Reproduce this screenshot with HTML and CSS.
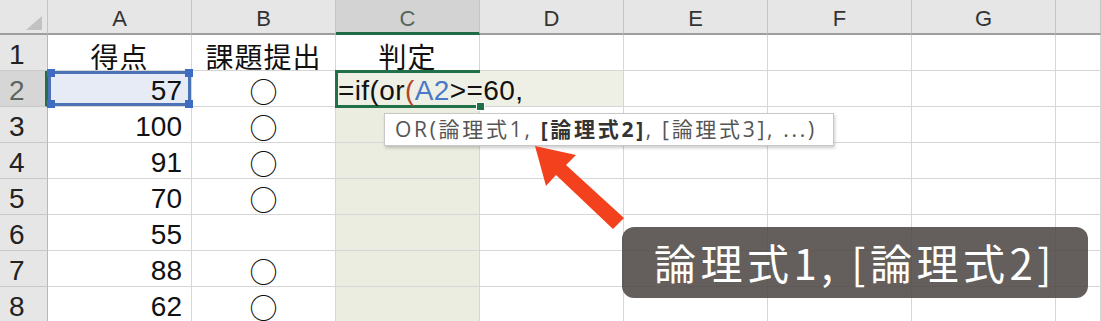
FILE: index.html
```html
<!DOCTYPE html>
<html lang="ja">
<head>
  <meta charset="UTF-8">
  <title>判定</title>
  <link rel="stylesheet" href="styles.css">
</head>
<body>
  <div class="sheet">
    <!-- header row -->
    <div class="corner"><span class="corner-mark"></span></div>
    <div class="colhead">A</div>
    <div class="colhead">B</div>
    <div class="colhead active">C</div>
    <div class="colhead">D</div>
    <div class="colhead">E</div>
    <div class="colhead">F</div>
    <div class="colhead">G</div>
    <div class="colhead"></div>

    <!-- row 1 -->
    <div class="rowhead">1</div>
    <div class="cell title">得点</div>
    <div class="cell title">課題提出</div>
    <div class="cell title">判定</div>
    <div class="cell"></div>
    <div class="cell"></div>
    <div class="cell"></div>
    <div class="cell"></div>
    <div class="cell"></div>

    <!-- row 2 -->
    <div class="rowhead active">2</div>
    <div class="cell num ref">57
      <span class="handle tl"></span><span class="handle tr"></span>
      <span class="handle bl"></span><span class="handle br"></span>
    </div>
    <div class="cell center"><span class="mark">○</span></div>
    <div class="cell edit">=if(or<span class="paren">(</span><span class="refname">A2</span>&gt;=60,<span class="fill-handle"></span></div>
    <div class="cell spill"></div>
    <div class="cell"></div>
    <div class="cell"></div>
    <div class="cell"></div>
    <div class="cell"></div>

    <!-- row 3 -->
    <div class="rowhead">3</div>
    <div class="cell num">100</div>
    <div class="cell center"><span class="mark">○</span></div>
    <div class="cell tint"></div>
    <div class="cell"></div>
    <div class="cell"></div>
    <div class="cell"></div>
    <div class="cell"></div>
    <div class="cell"></div>

    <!-- row 4 -->
    <div class="rowhead">4</div>
    <div class="cell num">91</div>
    <div class="cell center"><span class="mark">○</span></div>
    <div class="cell tint"></div>
    <div class="cell"></div>
    <div class="cell"></div>
    <div class="cell"></div>
    <div class="cell"></div>
    <div class="cell"></div>

    <!-- row 5 -->
    <div class="rowhead">5</div>
    <div class="cell num">70</div>
    <div class="cell center"><span class="mark">○</span></div>
    <div class="cell tint"></div>
    <div class="cell"></div>
    <div class="cell"></div>
    <div class="cell"></div>
    <div class="cell"></div>
    <div class="cell"></div>

    <!-- row 6 -->
    <div class="rowhead">6</div>
    <div class="cell num">55</div>
    <div class="cell center"></div>
    <div class="cell tint"></div>
    <div class="cell"></div>
    <div class="cell"></div>
    <div class="cell"></div>
    <div class="cell"></div>
    <div class="cell"></div>

    <!-- row 7 -->
    <div class="rowhead">7</div>
    <div class="cell num">88</div>
    <div class="cell center"><span class="mark">○</span></div>
    <div class="cell tint"></div>
    <div class="cell"></div>
    <div class="cell"></div>
    <div class="cell"></div>
    <div class="cell"></div>
    <div class="cell"></div>

    <!-- row 8 -->
    <div class="rowhead">8</div>
    <div class="cell num">62</div>
    <div class="cell center"><span class="mark">○</span></div>
    <div class="cell tint"></div>
    <div class="cell"></div>
    <div class="cell"></div>
    <div class="cell"></div>
    <div class="cell"></div>
    <div class="cell"></div>
  </div>

  <!-- function hint -->
  <div class="tooltip">OR(論理式1, <b>[論理式2]</b>, [論理式3], ...)</div>

  <svg class="arrow" width="1101" height="321" viewBox="0 0 1101 321">
    <polygon points="535,146 576,155 566,165 624,218 613,229 556,175 546,186" fill="#f4411d"/>
  </svg>

  <div class="caption">論理式1, [論理式2]</div>
</body>
</html>
```

FILE: styles.css
```css
* {
  margin: 0;
  padding: 0;
  box-sizing: border-box;
}

body {
  width: 1101px;
  height: 321px;
  overflow: hidden;
  background: #fff;
  position: relative;
  font-family: 'Liberation Sans', 'Noto Sans CJK JP', sans-serif;
  color: #111;
}

.sheet {
  display: grid;
  grid-template-columns: 48px repeat(7, 144px) 1fr;
  grid-template-rows: 35px repeat(8, 36px);
}

/* headers */
.corner {
  background: #e6e6e6;
  border-right: 1px solid #c4c4c4;
  border-bottom: 2px solid #9e9e9e;
  position: relative;
}

.corner-mark {
  position: absolute;
  right: 5px;
  bottom: 3px;
  width: 0;
  height: 0;
  border-left: 16px solid transparent;
  border-bottom: 14px solid #c2c2c2;
}

.colhead {
  background: #e6e6e6;
  border-right: 1px solid #c4c4c4;
  border-bottom: 2px solid #9e9e9e;
  font-size: 22px;
  line-height: 33px;
  padding-top: 2px;
  text-align: center;
  color: #333;
  overflow: hidden;
}

.colhead.active {
  background: #d3d3d3;
  border-bottom: 3px solid #1f6b45;
  color: #55655a;
}

.rowhead {
  background: #e6e6e6;
  border-right: 1px solid #b8b8b8;
  border-bottom: 1px solid #c9c9c9;
  font-size: 28px;
  line-height: 36px;
  padding-top: 2px;
  padding-left: 9px;
  color: #222;
  overflow: hidden;
}

.rowhead.active {
  background: #d6d6d6;
  border-right: 3px solid #2a6b4b;
  color: #5b665f;
}

/* cells */
.cell {
  border-right: 1px solid #d6d6d6;
  border-bottom: 1px solid #d6d6d6;
  font-size: 28px;
  line-height: 36px;
  white-space: nowrap;
  overflow: hidden;
}

.title {
  text-align: center;
  letter-spacing: 1px;
  padding-top: 6px;
}

.center {
  text-align: center;
  padding-top: 6px;
}

.num {
  text-align: right;
  padding-right: 9px;
  padding-top: 2px;
}

.mark {
  display: inline-block;
  font-family: 'Noto Sans CJK JP', sans-serif;
  font-size: 28px;
  line-height: 28px;
  vertical-align: top;
}

.tint {
  background: #ebede1;
}

.spill {
  background: #eef0e5;
}

.ref {
  position: relative;
  overflow: visible;
  background: #e6ebf6;
  box-shadow: inset 0 3px 0 #4a72b4, inset 0 -3px 0 #4a72b4, inset -3px 0 0 #4a72b4, inset 3px 0 0 #4a72b4;
  z-index: 2;
}

.handle {
  position: absolute;
  width: 8px;
  height: 8px;
  background: #3d6cc0;
}

.handle.tl { left: -1px; top: -2px; }
.handle.tr { right: -2px; top: -2px; }
.handle.bl { left: -1px; bottom: -2px; }
.handle.br { right: -2px; bottom: -2px; }

.edit {
  position: relative;
  overflow: visible;
  background: #eef0e5;
  border-top: 3px solid #21704a;
  border-left: 3px solid #21704a;
  border-bottom: 3px solid #21704a;
  border-right: none;
  margin: -1px 0 -1px -1px;
  line-height: 34px;
  padding-top: 1px;
  letter-spacing: 0.4px;
  color: #111;
  z-index: 3;
}

.paren {
  color: #b5442a;
}

.refname {
  color: #4a78c8;
}

.fill-handle {
  position: absolute;
  left: 138px;
  bottom: -6px;
  width: 9px;
  height: 9px;
  background: #21704a;
  border: 1px solid #fff;
}

/* overlays */
.tooltip {
  position: absolute;
  left: 384px;
  top: 113px;
  width: 450px;
  height: 33px;
  background: #fff;
  border: 1px solid #c8c8c8;
  box-shadow: 1px 2px 3px rgba(0, 0, 0, 0.2);
  font-family: 'Open Sans', 'Noto Sans CJK JP', sans-serif;
  font-size: 21px;
  line-height: 31px;
  padding-left: 10px;
  letter-spacing: 2.7px;
  color: #555;
  white-space: nowrap;
  overflow: hidden;
  z-index: 5;
}

.tooltip b {
  color: #333;
}

.arrow {
  position: absolute;
  left: 0;
  top: 0;
  z-index: 6;
}

.caption {
  position: absolute;
  left: 622px;
  top: 227px;
  width: 466px;
  height: 71px;
  border-radius: 12px;
  background: rgba(78, 73, 70, 0.88);
  color: #fff;
  font-family: 'Noto Sans CJK JP', sans-serif;
  font-size: 42px;
  line-height: 70px;
  text-align: center;
  letter-spacing: 4.5px;
  white-space: nowrap;
  z-index: 7;
}
```
